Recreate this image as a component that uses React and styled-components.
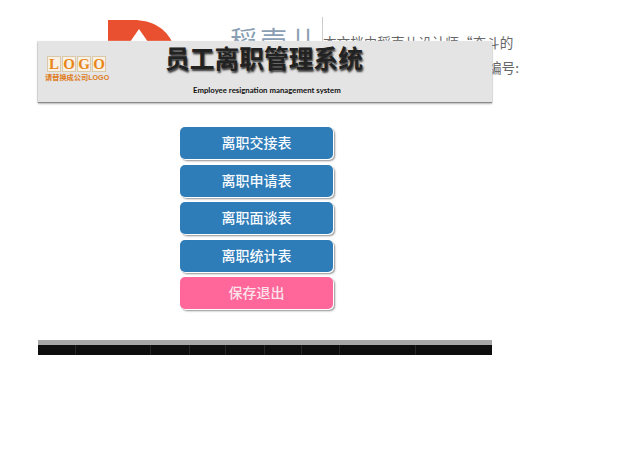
import React from 'react';
import styled, { createGlobalStyle } from 'styled-components';

const GlobalStyle = createGlobalStyle`
  html, body {
    margin: 0;
    background: #ffffff;
  }
  body {
    font-family: "Liberation Sans", "Noto Sans CJK SC", sans-serif;
  }
`;

const menuItems = ['离职交接表', '离职申请表', '离职面谈表', '离职统计表'];
const footerCells = [38, 75, 39, 36, 39, 37, 38, 76, 76];

const App = () => {
  return (
    <Page>
      <GlobalStyle />

      {/* document header sits behind the sheet, only its edges show */}
      <DocHeader>
        <BrandMark viewBox="0 0 65 22" width="65" height="22">
          <path d="M1 0 H26 C46 0 59 9 65 22 H1 Z" fill="#e9502f" />
          <path d="M32 9 L23 22 H41 Z" fill="#ffffff" />
        </BrandMark>
        <BrandName>稻壳儿</BrandName>
        <Divider />
        <DocNote>
          <NoteLine>本文档由稻壳儿设计师“奋斗的</NoteLine>
          <NoteLine align="right">编号:</NoteLine>
        </DocNote>
      </DocHeader>

      <Sheet>
        <Banner>
          <LogoBlock>
            <LogoLetters>
              {'LOGO'.split('').map((letter, i) => (
                <LogoLetter key={i}>{letter}</LogoLetter>
              ))}
            </LogoLetters>
            <LogoCaption>请替换成公司LOGO</LogoCaption>
          </LogoBlock>
          <Titles>
            <Title>员工离职管理系统</Title>
            <SubTitle>Employee resignation management system</SubTitle>
          </Titles>
        </Banner>

        <Menu>
          {menuItems.map((item) => (
            <MenuButton key={item}>{item}</MenuButton>
          ))}
          <MenuButton pink>保存退出</MenuButton>
        </Menu>

        <Footer>
          <FooterStripe />
          <FooterRow>
            {footerCells.map((w, i) => (
              <FooterCell key={i} style={{ width: w }} />
            ))}
          </FooterRow>
        </Footer>
      </Sheet>
    </Page>
  );
};

const Page = styled.div`
  display: grid;
  width: 640px;
  height: 453px;
  overflow: hidden;
  background: #ffffff;
`;

const DocHeader = styled.div`
  grid-area: 1 / 1;
  display: flex;
  align-items: flex-start;
  padding: 20px 0 0 107px;
`;

const BrandMark = styled.svg`
  display: block;
  flex: none;
`;

const BrandName = styled.div`
  margin: 7px 0 0 58px;
  width: 92px;
  font-size: 27px;
  line-height: 30px;
  letter-spacing: 3px;
  color: #8a9fb3;
  white-space: nowrap;
`;

const Divider = styled.div`
  width: 1px;
  height: 24px;
  margin-top: -3px;
  background: #cccccc;
`;

const DocNote = styled.div`
  width: 196px;
  display: flex;
  flex-direction: column;
  gap: 9px;
  padding-top: 14px;
`;

const NoteLine = styled.div`
  font-family: "Noto Sans CJK SC", sans-serif;
  font-size: 13.6px;
  line-height: 16px;
  color: #666666;
  white-space: nowrap;
  text-align: ${(props) => props.align || 'left'};
`;

const Sheet = styled.div`
  grid-area: 1 / 1;
  position: relative;
  width: 454px;
  margin-left: 38px;
  padding-top: 41px;
  display: flex;
  flex-direction: column;
  align-items: stretch;
`;

const Banner = styled.div`
  height: 61px;
  display: flex;
  background: #e4e4e4;
  box-shadow: 0 1px 1px #8a8a8a, 0 2px 2px #c4c4c4, -1px 0 1px #eeeeee;
`;

const LogoBlock = styled.div`
  width: 127px;
  padding: 15px 0 0 7px;
  box-sizing: border-box;
  display: flex;
  flex-direction: column;
  align-items: flex-start;
`;

const LogoLetters = styled.div`
  display: flex;
  gap: 1px;
  margin-left: 2px;
`;

const LogoLetter = styled.span`
  width: 14px;
  height: 16px;
  display: flex;
  align-items: center;
  justify-content: center;
  font-family: "Liberation Serif", serif;
  font-size: 15px;
  font-weight: bold;
  color: #e8861a;
  background: #f8f1e4;
  border: 1px solid #d9c9a8;
  box-sizing: border-box;
`;

const LogoCaption = styled.div`
  margin-top: 1px;
  font-size: 7.2px;
  line-height: 9px;
  font-weight: bold;
  color: #df7c1c;
  white-space: nowrap;
`;

const Titles = styled.div`
  display: flex;
  flex-direction: column;
  padding-top: 4px;
`;

const Title = styled.h1`
  margin: 0;
  font-size: 24.75px;
  line-height: 30px;
  font-weight: bold;
  color: #222222;
  white-space: nowrap;
  text-shadow: 1px 2px 2px #333333;
`;

const SubTitle = styled.div`
  margin: 9px 0 0 28px;
  font-family: "Lato", sans-serif;
  font-size: 7.8px;
  line-height: 12px;
  font-weight: 700;
  color: #111111;
  white-space: nowrap;
`;

const Menu = styled.div`
  display: flex;
  flex-direction: column;
  gap: 5.5px;
  margin: 25px 0 0 142px;
  width: 153px;
`;

const MenuButton = styled.button`
  height: 32px;
  padding: 0 0 2px;
  border: 0;
  border-radius: 5px;
  background: ${(props) => (props.pink ? '#ff6699' : '#2e7cb8')};
  color: ${(props) => (props.pink ? '#fbe3ec' : '#f8fbfe')};
  font-family: "Noto Sans CJK SC", sans-serif;
  font-size: 14px;
  font-weight: 500;
  line-height: 30px;
  text-align: center;
  box-shadow: 1px 1px 0 #ffffff, 2px 2px 2px #8f8f8f;
`;

const Footer = styled.div`
  margin-top: 31px;
  display: flex;
  flex-direction: column;
`;

const FooterStripe = styled.div`
  height: 5px;
  background: #a6a6a6;
`;

const FooterRow = styled.div`
  height: 10px;
  display: flex;
  background: #0d0d0d;
`;

const FooterCell = styled.div`
  box-sizing: border-box;
  border-right: 1px solid #262626;

  &:last-child {
    border-right: 0;
  }
`;

export default App;
